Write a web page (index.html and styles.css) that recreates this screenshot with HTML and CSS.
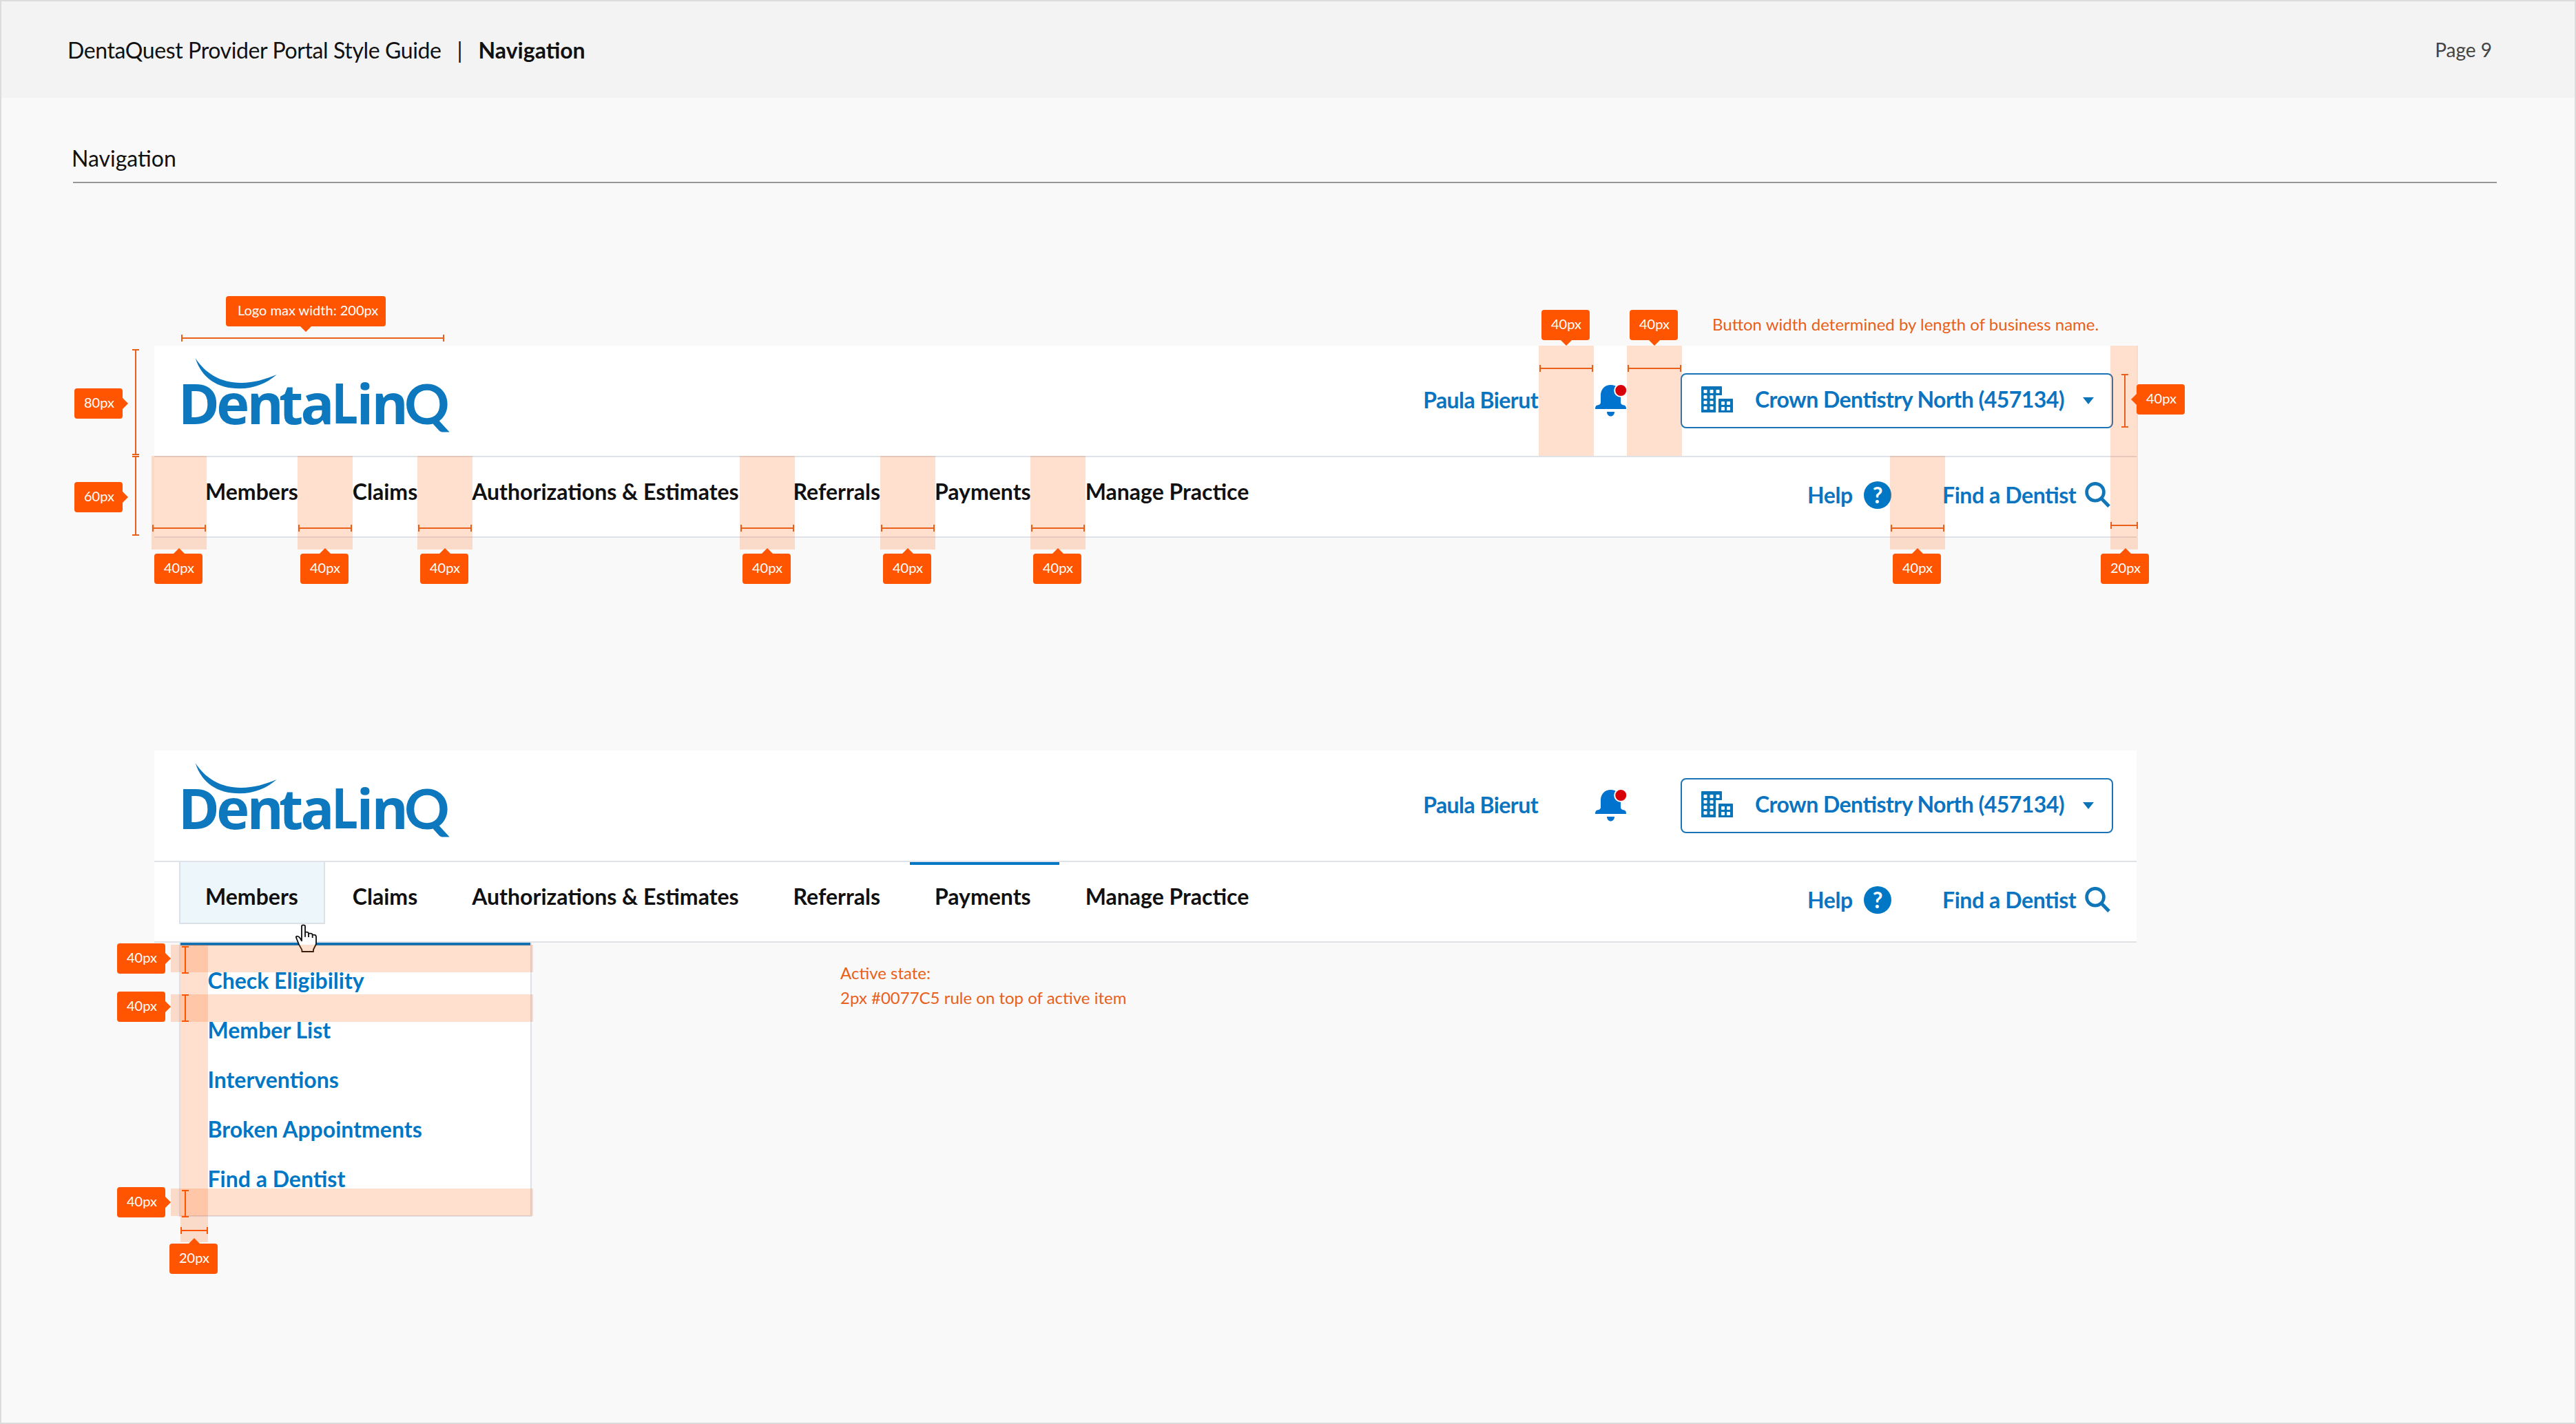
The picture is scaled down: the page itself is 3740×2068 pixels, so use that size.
FILE: index.html
```
<!DOCTYPE html>
<html lang="en">
<head>
    <meta charset="UTF-8">
    <meta name="viewport" content="width=device-width, initial-scale=1.0">
    <title>DentaQuest Provider Portal Style Guide</title>
    <link rel="stylesheet" href="styles.css">
</head>
<body>
<svg class="defs">
    <symbol id="logo" viewBox="0 12 440 160">
        <path d="M43.7 30.3C58 52 80 66 110 66C128 66 145 61 161.7 54C147 67 128 74.3 108 74.3C75 74.3 53 59 43.7 30.3Z"/>
        <text y="125.5" x="18.7 74.3 118.5 165 196.6">Denta</text>
        <text y="125.5" transform="translate(241.5 0) scale(.84 1)">L</text>
        <text y="125.5" x="277.5 299.5">in</text>
        <text y="125.5" x="347" class="logo-q">Q</text>
    </symbol>
    <symbol id="bell" viewBox="0 0 48 50">
        <path d="M24.5 2C16 2 10.5 8 10 16v11c0 3-2 4-5 4.500-2 .5-3 2-3 5.500h45c0-3.500-1-5-3-5.500-3-.5-5-1.500-5-4.500V16C38.500 8 33 2 24.500 2z"/>
        <path d="M19 41h11c0 4-2.500 6.500-5.500 6.500S19 45 19 41z"/>
        <circle cx="39.2" cy="10" r="9" fill="#d80008" stroke="#fff" stroke-width="2"/>
    </symbol>
    <symbol id="building" viewBox="0 0 46 38">
        <path d="M1 0h28q1 0 1 1v12h-9v25H0V1q0-1 1-1z"/>
        <path d="M26 18h19q1 0 1 1v19H25V19q0-1 1-1z"/>
        <g fill="#fff">
            <rect x="3.5" y="5" width="5" height="5" rx="1"/><rect x="12.5" y="5" width="5" height="5" rx="1"/><rect x="21.5" y="5" width="5" height="5" rx="1"/>
            <rect x="3.5" y="13" width="5" height="5" rx="1"/><rect x="12.5" y="13" width="5" height="5" rx="1"/>
            <rect x="3.5" y="21" width="5" height="5" rx="1"/><rect x="12.5" y="21" width="5" height="5" rx="1"/>
            <rect x="3.5" y="29" width="5" height="5" rx="1"/><rect x="12.5" y="29" width="5" height="5" rx="1"/>
            <rect x="29" y="22" width="5" height="5" rx="1"/><rect x="37" y="22" width="5" height="5" rx="1"/>
            <rect x="29" y="30" width="5" height="5" rx="1"/><rect x="37" y="30" width="5" height="5" rx="1"/>
        </g>
    </symbol>
    <symbol id="help" viewBox="0 0 40 40">
        <circle cx="20" cy="20" r="20"/>
        <text x="20" y="31.5" text-anchor="middle" class="help-mark">?</text>
    </symbol>
    <symbol id="search" viewBox="0 0 37 37">
        <circle cx="15" cy="14.7" r="12.4" fill="none" stroke="#1176b8" stroke-width="4.7"/>
        <path d="M24 24l11 11.3" stroke="#1176b8" stroke-width="5"/>
    </symbol>
</svg>

<div class="page">
    <header class="page-head">
        <span class="guide">DentaQuest Provider Portal Style Guide</span>
        <span class="sep">|</span>
        <strong>Navigation</strong>
        <span class="page-num">Page 9</span>
    </header>
    <h2 class="section-title">Navigation</h2>

    <!-- spacing -->
    <div class="portal">
        <div class="top-row">
            <svg class="logo"><use href="#logo"/></svg>
            <a class="user">Paula Bierut</a>
            <svg class="bell"><use href="#bell"/></svg>
            <div class="office">
                <svg class="building"><use href="#building"/></svg>
                <span>Crown Dentistry North (457134)</span>
                <i class="caret"></i>
            </div>
        </div>
        <div class="nav-row">
            <ul class="menu">
                <li>Members</li>
                <li>Claims</li>
                <li>Authorizations &amp; Estimates</li>
                <li>Referrals</li>
                <li>Payments</li>
                <li>Manage Practice</li>
            </ul>
            <a class="link link-help">Help <svg class="help"><use href="#help"/></svg></a>
            <a class="link link-find">Find a Dentist <svg class="search"><use href="#search"/></svg></a>
        </div>
    </div>

    <!-- hover and active states -->
    <div class="portal portal-states">
        <div class="top-row">
            <svg class="logo"><use href="#logo"/></svg>
            <a class="user">Paula Bierut</a>
            <svg class="bell"><use href="#bell"/></svg>
            <div class="office">
                <svg class="building"><use href="#building"/></svg>
                <span>Crown Dentistry North (457134)</span>
                <i class="caret"></i>
            </div>
        </div>
        <div class="nav-row">
            <ul class="menu">
                <li class="hover">Members</li>
                <li>Claims</li>
                <li>Authorizations &amp; Estimates</li>
                <li>Referrals</li>
                <li class="active">Payments</li>
                <li>Manage Practice</li>
            </ul>
            <a class="link link-help">Help <svg class="help"><use href="#help"/></svg></a>
            <a class="link link-find">Find a Dentist <svg class="search"><use href="#search"/></svg></a>
        </div>
        <ul class="dropdown">
            <li>Check Eligibility</li>
            <li>Member List</li>
            <li>Interventions</li>
            <li>Broken Appointments</li>
            <li>Find a Dentist</li>
        </ul>
    </div>

    <svg class="cursor" viewBox="48 45 110 135">
        <path d="M84 124V60q0-5 7-5t8 5v26h8q6 0 7 6h10q6 0 7 6h8q7 0 8 8v32l-12 24v9H85v-8L72 140l-8-20-4-10q-2-6 5-6 6 0 11 7z"/>
        <path d="M99 86v21M114 92v16M131 98v13"/>
    </svg>

    <!-- gaps in the first portal header -->
    <div class="gap low g1"><i class="dim-h"></i><b class="tag up">40px</b></div>
    <div class="gap low g2"><i class="dim-h"></i><b class="tag up">40px</b></div>
    <div class="gap low g3"><i class="dim-h"></i><b class="tag up">40px</b></div>
    <div class="gap low g4"><i class="dim-h"></i><b class="tag up">40px</b></div>
    <div class="gap low g5"><i class="dim-h"></i><b class="tag up">40px</b></div>
    <div class="gap low g6"><i class="dim-h"></i><b class="tag up">40px</b></div>
    <div class="gap low g7"><i class="dim-h"></i><b class="tag up">40px</b></div>
    <div class="gap high g8"><i class="dim-h"></i><b class="tag down">40px</b></div>
    <div class="gap high g9"><i class="dim-h"></i><b class="tag down">40px</b></div>
    <div class="gap edge"><i class="dim-h"></i><b class="tag up">20px</b></div>

    <i class="dim-v office-dim"></i><b class="tag left office-tag">40px</b>
    <i class="dim-v top-dim"></i><b class="tag right top-tag">80px</b>
    <i class="dim-v nav-dim"></i><b class="tag right nav-tag">60px</b>
    <i class="dim-h logo-dim"></i><b class="tag down logo-tag">Logo max width: 200px</b>
    <p class="note office-note">Button width determined by length of business name.</p>

    <!-- gaps in the dropdown -->
    <div class="gap side"><i class="dim-h"></i><b class="tag up">20px</b></div>
    <div class="gap row r1"><i class="dim-v"></i><b class="tag right">40px</b></div>
    <div class="gap row r2"><i class="dim-v"></i><b class="tag right">40px</b></div>
    <div class="gap row r3"><i class="dim-v"></i><b class="tag right">40px</b></div>
    <p class="note active-note">Active state:<br>2px #0077C5 rule on top of active item</p>
</div>
</body>
</html>
```
FILE: styles.css
```
* {
    box-sizing: border-box;
}
body {
    margin: 0;
    font-family: Lato, sans-serif;
    font-size: 32px;
    color: #111;
}
ul, p {
    margin: 0;
    padding: 0;
    list-style: none;
}
svg {
    flex: none;
    display: block;
}
.defs {
    display: none;
}
.page {
    position: relative;
    width: 3740px;
    height: 2068px;
    overflow: hidden;
    background: #f9f9f9;
    outline: 2px solid #dcdcdc;
    outline-offset: -2px;
}

/* page header */
.page-head {
    display: flex;
    align-items: center;
    height: 142px;
    padding: 2px 122px 0 98px;
    background: #f3f3f3;
}
.guide {
    letter-spacing: -.38px;
    font-feature-settings: "liga" 1;
}
.sep {
    width: 14px;
    margin: 0 20px 0 20px;
    display: flex;
    justify-content: center;
}
.page-num {
    margin-left: auto;
    font-size: 28px;
    color: #444;
}
.section-title {
    margin: 69px 115px 0 106px;
    padding-bottom: 15px;
    border-bottom: 2px solid #969696;
    font-size: 32px;
    line-height: 38px;
    font-weight: 400;
    text-indent: -2px;
}

/* portal header */
.portal {
    position: relative;
    width: 2878px;
    margin: 236px 0 0 224px;
    background: #fff;
}
.portal-states {
    margin-top: 309px;
}
.top-row, .nav-row {
    display: flex;
    align-items: center;
    border-bottom: 2px solid #dfe2e6;
}
.top-row {
    height: 162px;
    padding: 0 34px 0 16px;
}
.nav-row {
    height: 117px;
    padding: 0 38px 0 36px;
}
.logo {
    width: 440px;
    height: 160px;
    margin-right: auto;
    fill: #0e78be;
    font: 700 81.2px "Open Sans", sans-serif;
}
.logo-q {
    font-family: Lato, sans-serif;
}
.user, .office, .link {
    font-weight: 700;
    letter-spacing: -.42px;
    font-feature-settings: "liga" 1;
    color: #0b74c0;
    white-space: nowrap;
}
.user {
    padding-bottom: 3px;
    letter-spacing: -.55px;
}
.bell {
    width: 48px;
    height: 50px;
    margin: 0 78px 0 81px;
    fill: #0073cf;
}
.office {
    display: flex;
    align-items: center;
    width: 628px;
    height: 80px;
    padding: 0 0 5px 28px;
    border: 2px solid #1a74b5;
    border-radius: 8px;
    letter-spacing: -.54px;
}
.building {
    width: 46px;
    height: 38px;
    margin-right: 32px;
    fill: #0b74b8;
}
.caret {
    margin: 5px 0 0 27px;
    border: 8px solid transparent;
    border-top: 10px solid #0b74b8;
    border-bottom: 0;
}
.menu {
    display: flex;
    gap: 2px;
    align-self: flex-start;
    margin-right: auto;
    font-weight: 700;
}
.menu li {
    position: relative;
    height: 90px;
    padding: 11px 37px 0 36px;
    line-height: 77px;
    border: 2px solid transparent;
    border-top: 0;
}
.menu .hover {
    background: #edf6fa;
    border-color: #dce1e8;
}
.menu .active::before {
    content: "";
    position: absolute;
    left: 0;
    right: -4px;
    top: 0;
    height: 4px;
    background: #0077c5;
}
.link {
    display: flex;
    justify-content: space-between;
    align-items: center;
    padding-bottom: 6px;
}
.link-help {
    width: 122px;
    margin-right: 74px;
}
.link-find {
    width: 244px;
}
.help {
    width: 40px;
    height: 40px;
    fill: #0077c5;
}
.help-mark {
    fill: #fff;
    font: 700 32px Lato, sans-serif;
}
.search {
    width: 37px;
    height: 37px;
}

/* dropdown */
.dropdown {
    position: absolute;
    left: 36px;
    top: 279px;
    width: 512px;
    height: 398px;
    background: #fff;
    border: 2px solid #dde1ea;
    border-top: 0;
    font-weight: 700;
    line-height: 72px;
    color: #0077c5;
}
.dropdown::before {
    content: "";
    display: block;
    height: 4px;
    margin-bottom: 15px;
    background: #1173b7;
}
.dropdown li {
    padding-left: 39.5px;
}
.cursor {
    position: absolute;
    left: 426px;
    top: 1340px;
    width: 36.7px;
    height: 45px;
    fill: #fff;
    stroke: #111;
    stroke-width: 5.5;
    stroke-linejoin: round;
}

/* measurements */
.gap {
    position: absolute;
    width: 80px;
    background: rgba(255, 90, 0, .19);
}
.low {
    top: 662px;
    height: 136px;
}
.high {
    top: 502px;
    height: 160px;
}
.g1 { left: 220px; }
.g2 { left: 432px; }
.g3 { left: 606px; }
.g4 { left: 1074px; }
.g5 { left: 1278px; }
.g6 { left: 1496px; }
.g7 { left: 2744px; }
.g8 { left: 2234px; }
.g9 { left: 2362px; }
.edge {
    left: 3064px;
    top: 502px;
    width: 40px;
    height: 296px;
}
.side {
    left: 262px;
    top: 1372px;
    width: 40px;
    height: 432px;
}
.row {
    left: 248px;
    width: 526px;
    height: 40px;
}
.r1 { top: 1372px; }
.r2 { top: 1444px; }
.r3 { top: 1726px; }

.dim-h, .dim-v {
    position: absolute;
    color: #e8601a;
}
.side .dim-h, .row .dim-v {
    color: #ff5500;
}
.dim-h {
    height: 10px;
    border: solid;
    border-width: 0 2px;
    background: linear-gradient(currentColor, currentColor) center / 100% 2px no-repeat;
}
.dim-v {
    width: 10px;
    border: solid;
    border-width: 2px 0;
    background: linear-gradient(currentColor, currentColor) center / 2px 100% no-repeat;
}
.gap .dim-h {
    left: 1px;
    right: 1px;
}
.low .dim-h { top: 100px; }
.high .dim-h { top: 28px; }
.edge .dim-h {
    left: 0;
    right: 0;
    top: 256px;
}
.side .dim-h {
    left: 0;
    right: 0;
    top: 410px;
}
.row .dim-v {
    left: 16px;
    top: 2px;
    height: 40px;
}
.r2 .dim-v { top: 0; }
.office-dim {
    left: 3080px;
    top: 543px;
    height: 78px;
}
.top-dim {
    left: 192px;
    top: 507px;
    height: 154px;
}
.nav-dim {
    left: 192px;
    top: 662px;
    height: 116px;
}
.logo-dim {
    left: 263px;
    top: 486px;
    width: 382px;
}

.tag {
    position: absolute;
    width: 70px;
    height: 44px;
    padding-left: 14px;
    border-radius: 4px;
    background: #ff5500;
    font-size: 20px;
    font-weight: 400;
    line-height: 41px;
    color: #fff;
    white-space: nowrap;
}
.tag::after {
    content: "";
    position: absolute;
    border: 8px solid transparent;
}
.up::after {
    left: 28px;
    top: -16px;
    border-bottom-color: #ff5500;
}
.down::after {
    left: 28px;
    top: 44px;
    border-top-color: #ff5500;
}
.right::after {
    left: 70px;
    top: 14px;
    border-left-color: #ff5500;
}
.left::after {
    left: -16px;
    top: 14px;
    border-right-color: #ff5500;
}
.gap .tag { left: 4px; }
.low .tag { top: 142px; }
.high .tag { top: -52px; }
.edge .tag {
    left: -14px;
    top: 302px;
}
.side .tag {
    left: -16px;
    top: 434px;
}
.row .tag {
    left: -78px;
    top: -2px;
}
.r2 .tag { top: -4px; }
.office-tag {
    left: 3102px;
    top: 558px;
}
.top-tag {
    left: 108px;
    top: 564px;
}
.nav-tag {
    left: 108px;
    top: 700px;
}
.logo-tag {
    left: 328px;
    top: 430px;
    width: 232px;
    padding-left: 17px;
}
.logo-tag::after {
    left: 108px;
}
.note {
    position: absolute;
    font-size: 24px;
    line-height: 36px;
    color: #e8601a;
    white-space: nowrap;
}
.office-note {
    left: 2486px;
    top: 453px;
}
.active-note {
    left: 1220px;
    top: 1395px;
}
```
